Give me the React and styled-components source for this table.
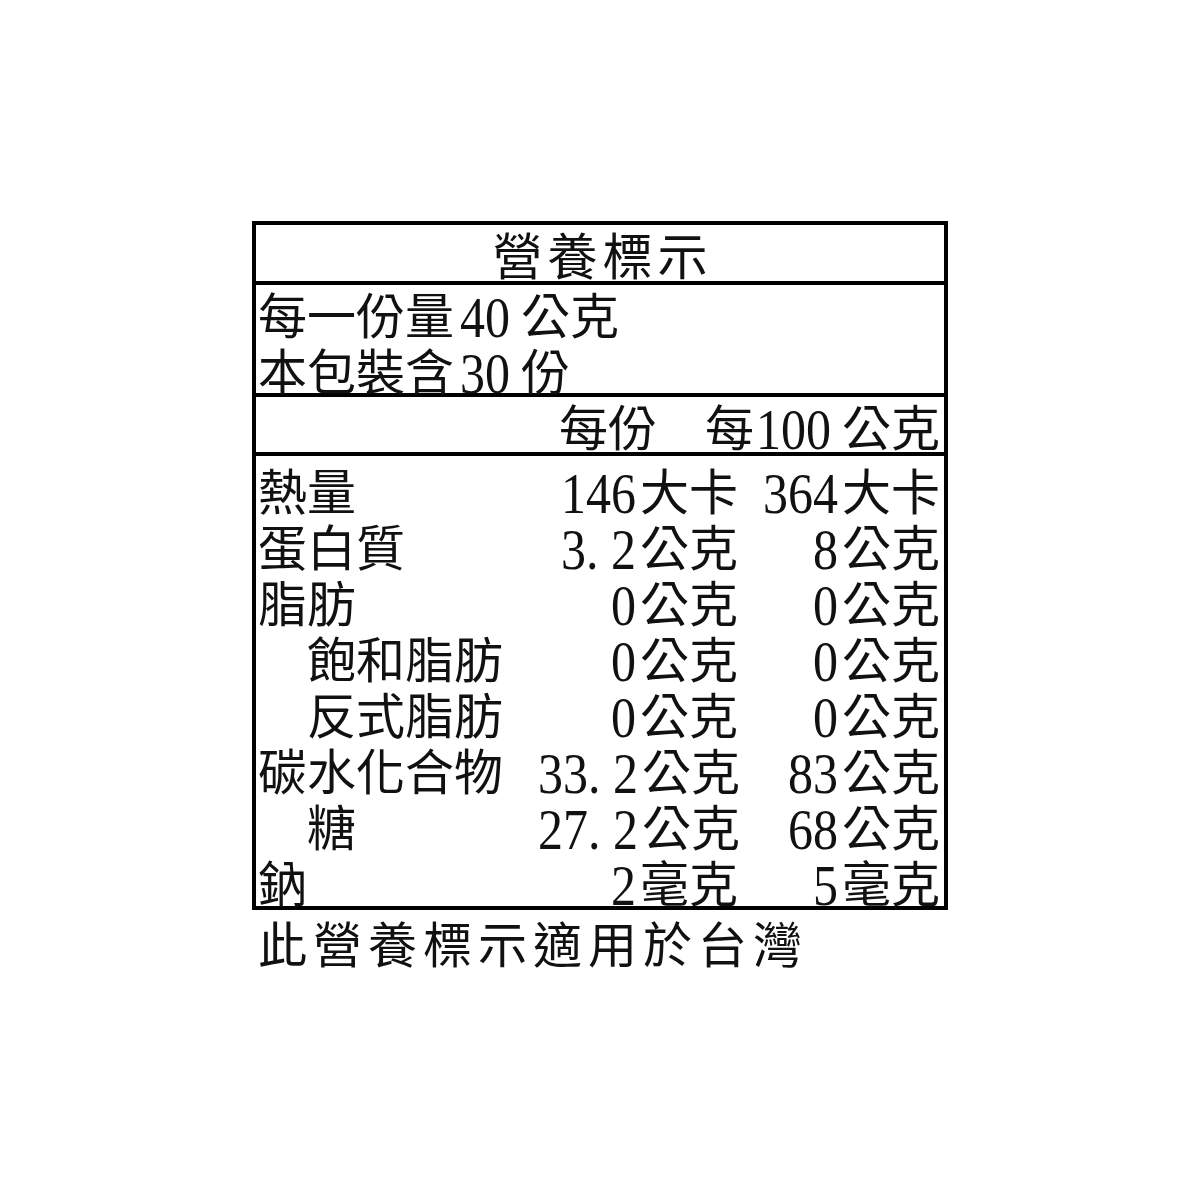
import React from "react";
import styled, { createGlobalStyle } from "styled-components";

const GlobalStyle = createGlobalStyle`
  html, body { margin: 0; padding: 0; background: #ffffff; }
  body { font-family: "Noto Sans CJK TC", "Noto Sans CJK SC", sans-serif; color: #111; }
`;

const Page = styled.div`
  width: 1200px;
  height: 1200px;
  box-sizing: border-box;
  padding: 221px 0 0 252px;
  display: flex;
  flex-direction: column;
  align-items: flex-start;
`;

const Label = styled.div`
  width: 696px;
  box-sizing: border-box;
  border: 4px solid #000;
  display: flex;
  flex-direction: column;
  font-family: "Noto Sans CJK TC", "Noto Sans CJK SC", sans-serif;
  font-size: 49px;
  color: #111;
`;

const Section = styled.div`
  border-bottom: ${(p) => (p.$last ? "none" : "4px solid #000")};
`;

const TitleRow = styled(Section)`
  height: 56px;
  display: flex;
  align-items: center;
  justify-content: center;
  line-height: 49px;
  font-size: 50px;
  letter-spacing: 5px;
  text-indent: 5px;
`;

const Serving = styled(Section)`
  height: 112px;
  box-sizing: border-box;
  padding-left: 2px;
  display: flex;
  flex-direction: column;
`;

const ServingLine = styled.div`
  height: 56px;
  line-height: 56px;
  white-space: pre;
`;

const HeaderRow = styled(Section)`
  height: 55px;
  line-height: 55px;
  display: flex;
  justify-content: flex-end;
  padding-right: 4px;
  white-space: pre;
`;

const HeadCell = styled.span`
  margin-right: ${(p) => p.$gap || 0}px;
`;

const Body = styled(Section)`
  height: 450px;
  box-sizing: border-box;
  padding: 1px 4px 0 2px;
  display: grid;
  grid-template-columns: 280px 200px 202px;
  grid-auto-rows: 56px;
  align-items: end;
  line-height: 49px;
`;

const RowLabel = styled.div`
  padding-left: ${(p) => (p.$indent ? "49px" : "0")};
  white-space: nowrap;
`;

const Value = styled.div`
  text-align: right;
  white-space: nowrap;
`;

const NumText = styled.span`
  display: inline-block;
  font-family: "Liberation Serif", "Times New Roman", serif;
  font-size: 50px;
  line-height: 0;
  transform: scaleY(1.16);
  transform-origin: 50% 100%;
  margin-left: ${(p) => p.$before || 0}px;
  margin-right: ${(p) => p.$after || 0}px;
`;

const Dot = styled.span`
  letter-spacing: 12.5px;
`;

const Footer = styled.div`
  margin-top: 4px;
  padding-left: 6px;
  font-size: 49px;
  line-height: 56px;
  letter-spacing: 6px;
  color: #111;
`;

const Num = ({ v, before, after }) => {
  const parts = v.split(".");
  return (
    <NumText $before={before} $after={after}>
      {parts[0]}
      {parts.length > 1 && <Dot>.</Dot>}
      {parts.length > 1 && parts[1]}
    </NumText>
  );
};

const rows = [
  { label: "熱量", a: ["146", "大卡"], b: ["364", "大卡"] },
  { label: "蛋白質", a: ["3.2", "公克"], b: ["8", "公克"] },
  { label: "脂肪", a: ["0", "公克"], b: ["0", "公克"] },
  { label: "飽和脂肪", indent: true, a: ["0", "公克"], b: ["0", "公克"] },
  { label: "反式脂肪", indent: true, a: ["0", "公克"], b: ["0", "公克"] },
  { label: "碳水化合物", a: ["33.2", "公克"], b: ["83", "公克"] },
  { label: "糖", indent: true, a: ["27.2", "公克"], b: ["68", "公克"] },
  { label: "鈉", a: ["2", "毫克"], b: ["5", "毫克"] },
];

export default function App() {
  return (
    <>
      <GlobalStyle />
      <Page>
        <Label>
          <TitleRow>營養標示</TitleRow>
          <Serving>
            <ServingLine>
              每一份量<Num v="40" before={6} /> 公克
            </ServingLine>
            <ServingLine>
              本包裝含<Num v="30" before={6} /> 份
            </ServingLine>
          </Serving>
          <HeaderRow>
            <HeadCell $gap={48}>每份</HeadCell>
            <HeadCell>
              每<Num v="100" before={2} /> 公克
            </HeadCell>
          </HeaderRow>
          <Body $last>
            {rows.map((r) => (
              <React.Fragment key={r.label}>
                <RowLabel $indent={r.indent}>{r.label}</RowLabel>
                <Value>
                  <Num v={r.a[0]} after={4} />
                  {r.a[1]}
                </Value>
                <Value>
                  <Num v={r.b[0]} after={4} />
                  {r.b[1]}
                </Value>
              </React.Fragment>
            ))}
          </Body>
        </Label>
        <Footer>此營養標示適用於台灣</Footer>
      </Page>
    </>
  );
}
